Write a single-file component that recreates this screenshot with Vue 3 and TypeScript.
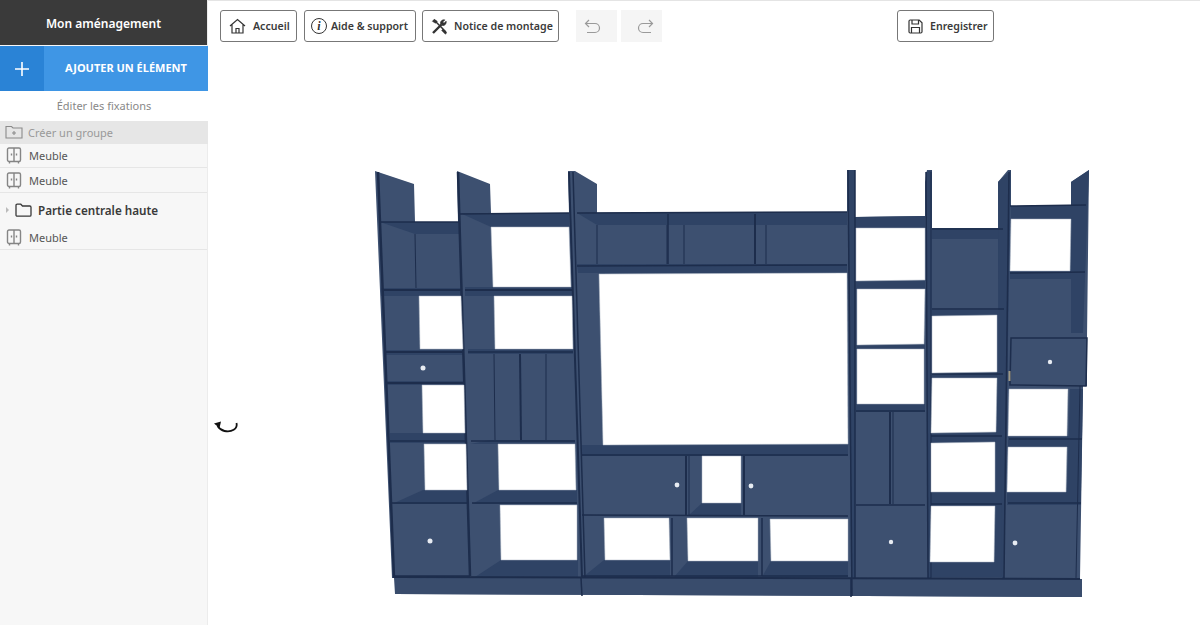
<script setup lang="ts">
type Quad = number[]

const rows = [
  { label: 'Meuble', kind: 'item' },
  { label: 'Meuble', kind: 'item' },
  { label: 'Partie centrale haute', kind: 'group' },
  { label: 'Meuble', kind: 'item' }
]

function pts(q: Quad) {
  return `${q[0]},${q[1]} ${q[2]},${q[3]} ${q[4]},${q[5]} ${q[6]},${q[7]}`
}

const outline = '375,171 414,184 415,222 458,222 457,171 490,184 491,213 569,213 568,171 575,171 597,184 597,213 847,212 847,170 855,170 855,217 925,216 925,182 927,170 932,170 932,228 998,228 998,182 1008,170 1011,170 1011,206 1071,205 1071,182 1089,170 1087,338 1087,386 1083,386 1080,578 1082,597 395,594 394,578 392,578'

// darker bands: shelves, posts and the floors seen in perspective
const bands: Quad[] = [
  [380, 222, 459, 222, 459, 234, 415, 234],
  [381, 288, 461, 288, 461, 296, 381, 296],
  [385, 350, 464, 350, 464, 355, 385, 355],
  [387, 381, 465, 381, 465, 385, 387, 385],
  [390, 433, 466, 433, 466, 443, 390, 443],
  [423, 490, 468, 490, 468, 504, 392, 504],
  [460, 213, 569, 213, 569, 227, 491, 227],
  [465, 287, 572, 287, 572, 296, 465, 296],
  [468, 349, 573, 349, 573, 354, 468, 354],
  [490, 440, 575, 440, 575, 444, 470, 444],
  [498, 490, 577, 490, 577, 504, 472, 504],
  [501, 560, 578, 560, 578, 577, 475, 577],
  [577, 213, 847, 212, 847, 225, 597, 225],
  [577, 264, 847, 264, 847, 273, 578, 273],
  [582, 445, 848, 445, 848, 456, 582, 456],
  [604, 560, 670, 560, 670, 577, 583, 577],
  [688, 561, 758, 561, 758, 577, 674, 577],
  [771, 561, 848, 561, 848, 577, 762, 577],
  [702, 503, 741, 503, 741, 515, 689, 515],
  [855, 217, 925, 216, 925, 228, 855, 228],
  [856, 281, 925, 281, 925, 289, 856, 289],
  [856, 345, 925, 345, 925, 349, 856, 349],
  [856, 404, 925, 404, 925, 412, 856, 412],
  [932, 228, 1003, 228, 1003, 239, 932, 239],
  [932, 310, 1004, 310, 1004, 316, 932, 316],
  [932, 373, 1003, 373, 1003, 378, 932, 378],
  [931, 433, 1002, 433, 1002, 443, 931, 443],
  [931, 492, 1002, 492, 1002, 506, 931, 506],
  [930, 562, 1002, 562, 1002, 577, 930, 577],
  [1011, 206, 1086, 205, 1085, 219, 1011, 219],
  [1010, 271, 1085, 271, 1085, 279, 1010, 279],
  [1008, 436, 1082, 436, 1082, 447, 1008, 447],
  [1007, 492, 1081, 492, 1081, 505, 1007, 505],
  [1071, 182, 1089, 170, 1083, 333, 1071, 333],
  [998, 239, 1004, 239, 1004, 310, 998, 310],
  [1070, 389, 1083, 389, 1081, 492, 1067, 492],
  [997, 316, 1008, 316, 1006, 492, 995, 492],
  [995, 506, 1004, 506, 1004, 562, 995, 562],
  [848, 170, 855, 170, 855, 578, 851, 578],
  [926, 172, 932, 170, 931, 578, 928, 578],
  [998, 182, 1011, 170, 1004, 578, 1002, 578]
]

const holes: Quad[] = [
  [419, 296, 461, 296, 463, 349, 420, 349],
  [422, 385, 464, 385, 465, 433, 423, 433],
  [424, 444, 466, 444, 467, 490, 425, 490],
  [491, 227, 569, 227, 571, 287, 493, 287],
  [494, 296, 572, 296, 573, 349, 495, 349],
  [498, 444, 575, 444, 576, 490, 499, 490],
  [500, 505, 577, 505, 577, 560, 501, 560],
  [599, 274, 847, 273, 848, 444, 603, 445],
  [702, 456, 741, 456, 741, 503, 702, 503],
  [604, 518, 669, 518, 670, 560, 605, 560],
  [687, 518, 758, 518, 758, 561, 688, 561],
  [770, 519, 848, 519, 848, 561, 771, 561],
  [856, 228, 925, 228, 925, 280, 856, 281],
  [857, 289, 925, 289, 924, 344, 857, 345],
  [857, 349, 924, 349, 924, 404, 857, 404],
  [932, 316, 997, 315, 997, 372, 932, 373],
  [932, 378, 997, 378, 996, 432, 931, 433],
  [931, 443, 995, 442, 995, 492, 931, 492],
  [931, 506, 995, 506, 994, 562, 930, 562],
  [1011, 219, 1071, 219, 1070, 271, 1010, 271],
  [1009, 389, 1068, 389, 1067, 436, 1008, 436],
  [1008, 447, 1067, 447, 1066, 492, 1007, 492]
]

// x1 y1 x2 y2 and stroke width
const lines: number[][] = [
  [378, 172, 394, 578, 2.5],
  [458, 172, 470, 576, 2.5],
  [569, 172, 582, 578, 2],
  [573, 172, 585, 578, 1.5],
  [848, 170, 852, 596, 1.5],
  [855, 170, 855, 578, 1.5],
  [926, 172, 928, 578, 1.5],
  [931, 172, 931, 578, 1],
  [1009, 172, 1004, 578, 1.5],
  [381, 222, 459, 222, 1.5],
  [382, 290, 461, 290, 2],
  [385, 352, 464, 352, 2],
  [387, 383, 465, 383, 2],
  [390, 441, 467, 441, 1.5],
  [392, 503, 469, 503, 1.5],
  [393, 576, 470, 576, 1.5],
  [460, 214, 569, 213, 1.5],
  [465, 290, 572, 290, 2],
  [468, 352, 573, 352, 1.5],
  [471, 441, 575, 441, 1.5],
  [472, 503, 577, 503, 1.5],
  [395, 577, 1080, 579, 2],
  [577, 266, 847, 265, 1.5],
  [577, 213, 847, 212, 1.5],
  [582, 455, 848, 455, 1.5],
  [582, 515, 848, 516, 1.5],
  [582, 576, 848, 576, 1.5],
  [686, 456, 686, 516, 2],
  [689, 456, 689, 516, 1],
  [744, 456, 744, 516, 2],
  [672, 518, 672, 576, 1.5],
  [762, 518, 762, 576, 1.5],
  [667, 225, 667, 264, 1],
  [668, 214, 668, 264, 1.5],
  [684, 225, 684, 264, 1],
  [755, 214, 755, 264, 2],
  [766, 225, 766, 264, 1],
  [597, 225, 597, 264, 1],
  [494, 354, 495, 440, 1],
  [520, 354, 521, 440, 2],
  [546, 354, 546, 440, 1],
  [415, 234, 416, 288, 1],
  [856, 411, 925, 411, 1.5],
  [856, 505, 925, 505, 1.5],
  [890, 412, 890, 504, 2],
  [893, 412, 893, 504, 1],
  [932, 229, 1003, 229, 1.5],
  [932, 309, 1004, 309, 1.5],
  [932, 374, 1003, 374, 1.5],
  [931, 436, 1002, 436, 1.5],
  [931, 504, 1002, 504, 1.5],
  [1010, 206, 1086, 205, 1.5],
  [1010, 273, 1085, 272, 1.5],
  [1009, 439, 1082, 439, 1.5],
  [1008, 503, 1081, 503, 1.5],
  [581, 578, 582, 596, 1.5],
  [851, 578, 851, 597, 1.5],
  [1080, 386, 1076, 578, 1]
]

const handles = [
  [423, 368, 2.5], [430, 541, 2.5], [677, 485, 2.4], [751, 486, 2.4],
  [1050, 362, 2.2], [891, 542, 2.2], [1015, 543, 2.4]
]
</script>

<template>
  <div class="app">
    <aside class="side">
      <div class="title">Mon aménagement</div>
      <div class="add">
        <span class="add-plus">
          <svg width="16" height="16" viewBox="0 0 16 16"><path d="M8 1v14M1 8h14" stroke="#fff" stroke-width="1.6" /></svg>
        </span>
        <span class="add-label">AJOUTER UN ÉLÉMENT</span>
      </div>
      <div class="edit">Éditer les fixations</div>
      <div class="create">
        <svg width="18" height="14" viewBox="0 0 18 14" fill="none" stroke="#8a8a8a" stroke-width="1.1">
          <path d="M1 3V1.500h5.500L8 3h9v10H1z" />
          <path d="M9 6v4M7 8h4" />
        </svg>
        <span>Créer un groupe</span>
      </div>
      <template v-for="(row, i) in rows" :key="i">
        <div v-if="row.kind === 'item'" class="row">
          <svg width="16" height="17" viewBox="0 0 16 17" fill="none" stroke="#858585" stroke-width="1.4">
            <rect x="1.500" y="1" width="13" height="13.500" rx="1.500" />
            <path d="M8 1v13.500M3.500 14.500V16.500M12.500 14.500V16.500" />
            <path d="M5.500 6.500v2M10.500 6.500v2" />
          </svg>
          <span>{{ row.label }}</span>
        </div>
        <div v-else class="group">
          <span class="caret" />
          <svg width="17" height="14" viewBox="0 0 17 14" fill="none" stroke="#3a3a3a" stroke-width="1.3">
            <path d="M1 12V2.500C1 1.700 1.500 1.200 2.200 1.200h3.600L7.500 3h7.300c.7 0 1.200.5 1.200 1.200V12c0 .7-.5 1.200-1.200 1.200H2.200C1.500 13.200 1 12.700 1 12z" />
          </svg>
          <span>{{ row.label }}</span>
        </div>
      </template>
    </aside>

    <main class="main">
      <div class="toolbar">
        <button class="btn home">
          <svg width="17" height="16" viewBox="0 0 17 16" fill="none" stroke="#333" stroke-width="1.2">
            <path d="M1 8l7.500-6.500L16 8M3 6.500V15h11V6.500" />
            <path d="M7 15v-4.500h3V15" />
          </svg>
          Accueil
        </button>
        <button class="btn help">
          <span class="info">i</span>
          Aide &amp; support
        </button>
        <button class="btn notice">
          <svg width="17" height="17" viewBox="0 0 17 17" fill="none" stroke="#333">
            <path d="M2 15L10.500 6.500" stroke-width="2.400" />
            <path d="M9.500 5.500c-.3-2.200 1.700-4.200 4.300-3.600L11.700 4l1.300 1.300 2.100-2.100c.6 2.600-1.400 4.600-3.600 4.300z" fill="#333" stroke-width=".7" />
            <path d="M2.800 1.800L15 14" stroke-width="1.500" />
            <path d="M1.300 3.300l2-2 3 2-.7 1.200-1.200.7z" fill="#333" stroke-width=".5" />
            <path d="M12 11l3.800 3.800-1.400 1.400L10.600 12.400z" fill="#333" stroke-width=".5" />
          </svg>
          Notice de montage
        </button>
        <button class="ghost undo">
          <svg width="17" height="15" viewBox="0 0 17 15" fill="none" stroke="#9a9a9a" stroke-width="1.200">
            <path d="M5 1L1.500 4.500 5 8" />
            <path d="M1.500 4.500H11a4.200 4.200 0 0 1 0 9H3" />
          </svg>
        </button>
        <button class="ghost redo">
          <svg width="17" height="15" viewBox="0 0 17 15" fill="none" stroke="#9a9a9a" stroke-width="1.200">
            <path d="M12 1l3.500 3.500L12 8" />
            <path d="M15.500 4.500H6a4.200 4.200 0 0 0 0 9h8" />
          </svg>
        </button>
        <button class="btn save">
          <svg width="15" height="15" viewBox="0 0 15 15" fill="none" stroke="#333" stroke-width="1.200">
            <path d="M1 2.200C1 1.500 1.500 1 2.200 1h9L14 3.800v9c0 .7-.5 1.200-1.200 1.200H2.200C1.500 14 1 13.500 1 12.800z" />
            <path d="M4 1v4h6.500V1M3.500 14V8.500h8V14" />
          </svg>
          Enregistrer
        </button>
      </div>

      <svg class="scene" width="992" height="625" viewBox="208 0 992 625">
        <polygon :points="outline" fill="#3d5070" />
        <polygon points="395,578 1082,579 1082,597 395,594" fill="#394c6c" />
        <polygon v-for="(b, i) in bands" :key="'b' + i" :points="pts(b)" fill="#2f4365" />
        <line v-for="(l, i) in lines" :key="'l' + i" :x1="l[0]" :y1="l[1]" :x2="l[2]" :y2="l[3]" :stroke-width="l[4]" stroke="#1d2d4c" />
        <polygon v-for="(h, i) in holes" :key="'h' + i" :points="pts(h)" fill="#fff" stroke="#a9b2c0" stroke-width=".5" />
        <polygon points="1011,338 1087,338 1086,386 1010,385" fill="#3d5070" stroke="#1d2d4c" stroke-width="1.500" />
        <rect x="1008.500" y="371" width="2" height="10" fill="#a09a86" />
        <circle v-for="(c, i) in handles" :key="'c' + i" :cx="c[0]" :cy="c[1]" :r="c[2]" fill="#e8ecf2" />
        <path d="M236.500 423c1.500 6-5 9.500-12 8-3-.7-5-2-7-5" fill="none" stroke="#111" stroke-width="1.800" />
        <path d="M214 423.500l7-2-1.500 6.500z" fill="#111" />
      </svg>
    </main>
  </div>
</template>

<style>
html, body { margin: 0; background: #fff; }
</style>

<style scoped>
.app {
  display: flex;
  width: 1200px;
  height: 625px;
  overflow: hidden;
  font-family: "Noto Sans", "Open Sans", sans-serif;
}

.side {
  width: 207px;
  flex: none;
  background: #f7f7f7;
  border-right: 1px solid #ececec;
  font-size: 11px;
  color: #555;
}

.title {
  height: 45px;
  box-sizing: border-box;
  padding-top: 2px;
  background: #3a3a3a;
  color: #fff;
  font-size: 12px;
  font-weight: 600;
  display: flex;
  align-items: center;
  justify-content: center;
}

.add {
  height: 45px;
  display: flex;
  background: #3f96e5;
  color: #fff;
  margin-top: 1px;
  margin-right: -1px;
}

.add-plus {
  width: 44px;
  background: #2a83d6;
  display: flex;
  align-items: center;
  justify-content: center;
}

.add-label {
  flex: 1;
  text-align: center;
  line-height: 43px;
  font-size: 11px;
  font-weight: 700;
}

.edit {
  height: 30px;
  box-sizing: border-box;
  padding-bottom: 2px;
  background: #fff;
  color: #888;
  display: flex;
  align-items: center;
  justify-content: center;
  margin-right: -1px;
}

.create {
  height: 23px;
  box-sizing: border-box;
  padding: 0 0 1px 5px;
  background: #e6e6e6;
  color: #999;
  display: flex;
  align-items: center;
  gap: 5px;
  margin-right: -1px;
}

.row {
  height: 24px;
  display: flex;
  align-items: center;
  gap: 7px;
  padding-left: 6px;
  border-bottom: 1px solid #e6e6e6;
  box-sizing: border-box;
}

.row + .row {
  height: 25px;
  padding-top: 1px;
}

.group {
  height: 33px;
  box-sizing: border-box;
  display: flex;
  align-items: center;
  padding-left: 6px;
  font-size: 11.700px;
  font-weight: 600;
  color: #3a3a3a;
}

.group svg {
  margin-left: 6px;
  margin-right: 6px;
}

.caret {
  width: 0;
  height: 0;
  border-left: 3px solid #bbb;
  border-top: 3px solid transparent;
  border-bottom: 3px solid transparent;
}

.main {
  flex: 1;
  position: relative;
  border-top: 1px solid #e4e4e4;
  box-sizing: border-box;
}

.toolbar {
  position: relative;
  z-index: 1;
  display: flex;
  gap: 6px;
  padding: 9px 0 0 12px;
}

.btn {
  height: 32px;
  box-sizing: border-box;
  display: flex;
  align-items: center;
  gap: 7px;
  padding: 0 0 0 8px;
  background: #fff;
  border: 1px solid #777;
  border-radius: 3px;
  font: 600 10.600px "Noto Sans", "Open Sans", sans-serif;
  color: #3a3a3a;
  white-space: nowrap;
}

.btn svg,
.info {
  flex: none;
}

.home { width: 77px; }
.help { width: 112px; margin-left: 1px; padding-left: 6px; gap: 4px; }
.notice { width: 137px; gap: 6px; }
.save { width: 97px; margin-left: 229px; padding-left: 10px; }

.info {
  width: 16px;
  height: 16px;
  box-sizing: border-box;
  border: 1px solid #333;
  border-radius: 50%;
  font: italic 700 12px/14px "Liberation Serif", serif;
  text-align: center;
  color: #333;
}

.ghost {
  width: 41px;
  height: 32px;
  border: none;
  padding: 0;
  background: #f5f5f5;
  display: flex;
  align-items: center;
  justify-content: center;
}

.undo { padding-right: 8px; }
.redo { padding-left: 8px; }

.btn + .ghost {
  margin-left: 11px;
}

.ghost + .ghost {
  margin-left: -2px;
}

.scene {
  position: absolute;
  left: 0;
  top: -1px;
}
</style>
